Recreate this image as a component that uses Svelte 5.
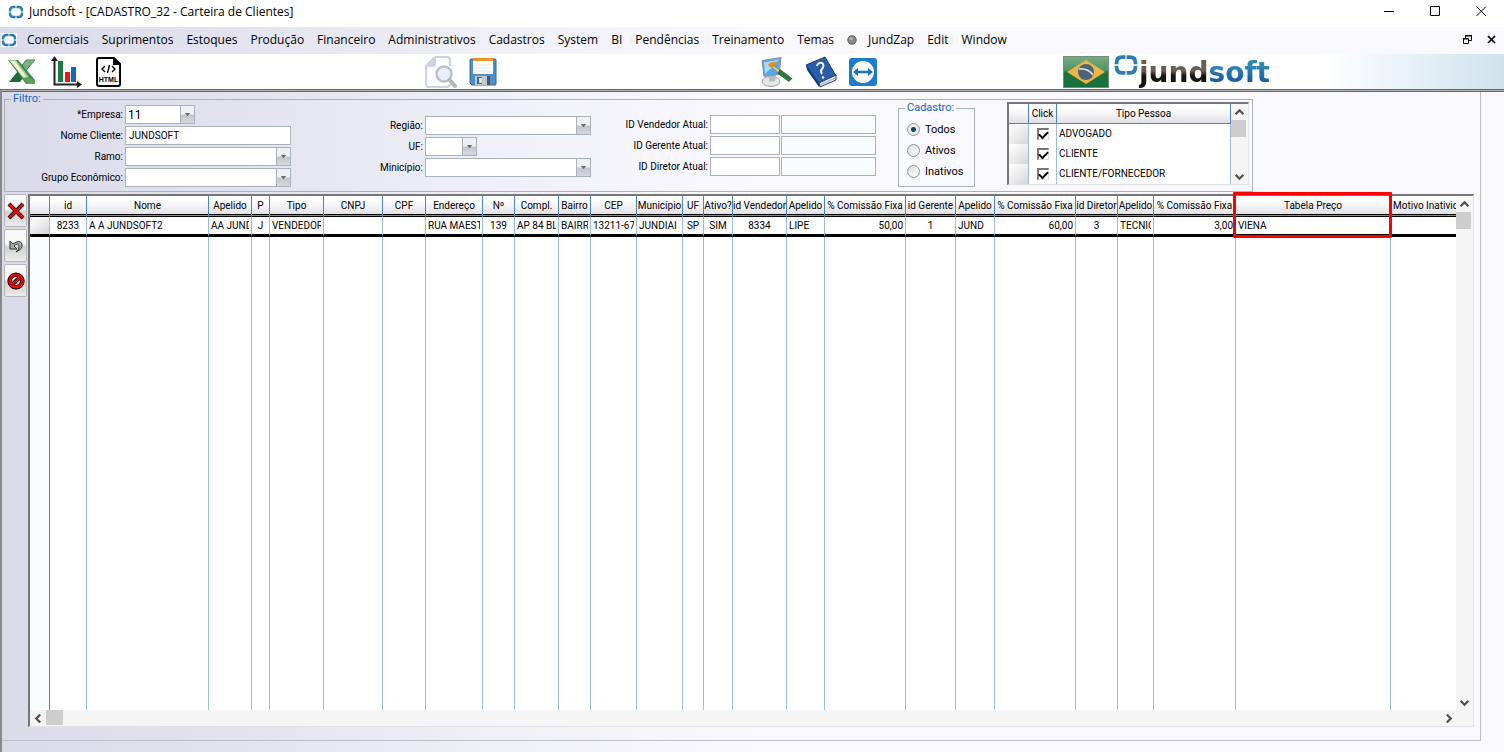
<script>
  const menus = ['Comerciais', 'Suprimentos', 'Estoques', 'Produção', 'Financeiro', 'Administrativos', 'Cadastros', 'System', 'BI', 'Pendências', 'Treinamento', 'Temas'];
  const menusEnd = ['JundZap', 'Edit', 'Window'];

  const tipos = ['ADVOGADO', 'CLIENTE', 'CLIENTE/FORNECEDOR'];
  const status = ['Todos', 'Ativos', 'Inativos'];
  let cadastro = 'Todos';

  const cols = [
    { name: 'id', w: 37, value: '8233', align: 'mid-cell' },
    { name: 'Nome', w: 122, value: 'A A JUNDSOFT2' },
    { name: 'Apelido', w: 43, value: 'AA JUND' },
    { name: 'P', w: 18, value: 'J', align: 'mid-cell' },
    { name: 'Tipo', w: 54, value: 'VENDEDOR' },
    { name: 'CNPJ', w: 59, value: '' },
    { name: 'CPF', w: 43, value: '' },
    { name: 'Endereço', w: 57, value: 'RUA MAEST' },
    { name: 'Nº', w: 32, value: '139', align: 'mid-cell' },
    { name: 'Compl.', w: 44, value: 'AP 84 BL' },
    { name: 'Bairro', w: 32, value: 'BAIRR' },
    { name: 'CEP', w: 46, value: '13211-670' },
    { name: 'Município', w: 46, value: 'JUNDIAI' },
    { name: 'UF', w: 21, value: 'SP', align: 'mid-cell' },
    { name: 'Ativo?', w: 29, value: 'SIM', align: 'mid-cell' },
    { name: 'id Vendedor', w: 54, value: '8334', align: 'mid-cell' },
    { name: 'Apelido', w: 38, value: 'LIPE' },
    { name: '% Comissão Fixa', w: 81, value: '50,00', align: 'num-cell' },
    { name: 'id Gerente', w: 50, value: '1', align: 'mid-cell' },
    { name: 'Apelido', w: 39, value: 'JUND' },
    { name: '% Comissão Fixa', w: 81, value: '60,00', align: 'num-cell' },
    { name: 'id Diretor', w: 42, value: '3', align: 'mid-cell' },
    { name: 'Apelido', w: 36, value: 'TECNIC' },
    { name: '% Comissão Fixa', w: 82, value: '3,00', align: 'num-cell' },
    { name: 'Tabela Preço', w: 155, value: 'VIENA', marked: true },
  ];
</script>

{#snippet mark()}
  <svg class="mark" viewBox="0 0 16 14" aria-hidden="true">
    <g fill="none" stroke="#2a7db5" stroke-width="2.4">
      <path d="M7.6 2H5.5Q2 2 2 5.5V6.6" /><path d="M8.4 2H10.5Q14 2 14 5.5V6.6" />
      <path d="M2 7.4V8.5Q2 12 5.5 12H7.6" /><path d="M14 7.4V8.5Q14 12 10.5 12H8.4" />
    </g>
  </svg>
{/snippet}

{#snippet chevron(dir)}
  <svg class="chevron {dir}" viewBox="0 0 8 8" aria-hidden="true">
    <path d="M0.5 5.5L4 2L7.5 5.5" fill="none" stroke="#505050" stroke-width="2" />
  </svg>
{/snippet}

{#snippet combo(id, value, size)}
  <span class="combo {size}">
    <select {id}><option>{value}</option></select>
    <svg class="drop" viewBox="0 0 14 17" aria-hidden="true"><path d="M4 7H10L7 10.5Z" fill="#6d6d6d" /></svg>
  </span>
{/snippet}

<div class="app">
  <header class="titlebar">
    {@render mark()}
    <h1>Jundsoft - [CADASTRO_32 - Carteira de Clientes]</h1>
    <div class="window-buttons">
      <button aria-label="Minimize"><svg viewBox="0 0 11 11"><path d="M0 5.5H10" stroke="#000" /></svg></button>
      <button aria-label="Maximize"><svg viewBox="0 0 11 11"><path d="M0.5 0.5H9.5V9.5H0.5Z" fill="none" stroke="#000" /></svg></button>
      <button aria-label="Close"><svg viewBox="0 0 11 11"><path d="M0.5 0.5L10 10M10 0.5L0.5 10" stroke="#000" /></svg></button>
    </div>
  </header>

  <nav class="menubar">
    <span class="menu-mark">{@render mark()}</span>
    {#each menus as m}
      <button>{m}</button>
    {/each}
    <svg class="dot" viewBox="0 0 10 10" aria-hidden="true">
      <circle cx="5" cy="5" r="4.2" fill="#8b8e8b" stroke="#555" /><circle cx="4" cy="3.6" r="1.6" fill="#b4b6b4" />
    </svg>
    {#each menusEnd as m}
      <button>{m}</button>
    {/each}
    <div class="child-buttons">
      <button aria-label="Restore window">
        <svg viewBox="0 0 9 9"><path d="M2.5 3V0.5H8.5V5.5H6M2 1H9M0.5 3.5H5.5V8.5H0.5ZM0 4H6" fill="none" stroke="#000" /></svg>
      </button>
      <button aria-label="Close window">
        <svg viewBox="0 0 9 9"><path d="M1 1L8 8M8 1L1 8" stroke="#000" stroke-width="1.7" /></svg>
      </button>
    </div>
  </nav>

  <div class="toolbar">
    <div class="tools first">
      <button aria-label="Excel">
        <svg viewBox="0 0 28 26">
          <path d="M18 1H27L14 16L9 13Z" fill="#7fae80" stroke="#4a8a58" />
          <path d="M1 23L10 12L17 16L12 23Z" fill="#1d6b3a" />
          <path d="M0 1H10L27 21V25H18Z" fill="#3d8a4e" />
          <path d="M1 1H8L21 18L17 21Z" fill="#a9c98f" />
          <path d="M2 2H7L18 17L16 19Z" fill="#eef0cf" />
          <path d="M15 19L21 18L27 22V25H19Z" fill="#5aa15c" />
        </svg>
      </button>
      <button aria-label="Gráfico">
        <svg class="chart" viewBox="0 0 32 32">
          <path d="M4.5 4V28.5H27" fill="none" stroke="#222" stroke-width="2" />
          <path d="M1 5L4.5 0L8 5ZM27 25L32 28.5L27 32Z" fill="#222" />
          <path d="M8 5H13V26H8Z" fill="#1f7a43" /><path d="M15 16H20V26H15Z" fill="#f01414" />
          <path d="M21 11H26V26H21Z" fill="#1668b8" />
        </svg>
      </button>
      <button aria-label="HTML">
        <svg class="html" viewBox="0 0 25 30">
          <path d="M3 1H18L24 7V27Q24 29 22 29H3Q1 29 1 27V3Q1 1 3 1Z" fill="#fff" stroke="#000" stroke-width="2" />
          <path d="M17 0L25 8H17Z" />
          <path d="M9 9L6 12L9 15M16 9L19 12L16 15M13.5 8L11.5 16" fill="none" stroke="#000" stroke-width="1.4" />
          <text x="12.5" y="25" text-anchor="middle">HTML</text>
        </svg>
      </button>
    </div>
    <div class="tools second">
      <button aria-label="Visualizar" disabled>
        <svg viewBox="0 0 32 32">
          <path d="M10 1H22Q25 1 25 4V10M10 1L1 10V28Q1 31 4 31H21Q25 31 25 28M10 1V8Q10 10 8 10H1" fill="none" stroke="#cdd2ea" stroke-width="2.2" />
          <path d="M10 1V10H1Z" fill="#cdd2ea" />
          <circle cx="19" cy="18" r="7.5" fill="#e7f0fb" stroke="#bcc0c6" stroke-width="2.4" />
          <path d="M24.5 24L30 30" stroke="#b3b6ba" stroke-width="4" stroke-linecap="round" />
        </svg>
      </button>
      <button aria-label="Salvar">
        <svg viewBox="0 0 28 28">
          <path d="M1 2Q1 1 2 1H26Q27 1 27 2V26Q27 27 26 27H3L1 25Z" fill="#4d8fca" stroke="#36699b" />
          <path d="M4 1H24V16H4Z" fill="#fff" /><path d="M4 0H24V3H4Z" fill="#f09524" />
          <path d="M6 7H22M6 10H22M6 13H22" stroke="#e3e6ea" />
          <path d="M6 18H21V27H6Z" fill="#c2c8ce" /><path d="M8 19H13V26H8Z" fill="#346896" />
          <path d="M10 20H13V25H10Z" fill="#dde1e5" /><path d="M18 18H21V27H18Z" fill="#4a5866" />
        </svg>
      </button>
    </div>
    <div class="tools third">
      <button aria-label="Temas">
        <svg viewBox="0 0 32 31">
          <ellipse cx="10" cy="25" rx="9" ry="5" fill="#e4e7ea" stroke="#9aa1a8" />
          <path d="M8 18H15L14 25H8Z" fill="#b5bcc4" />
          <path d="M1 4L20 1L18 18L3 20Z" fill="#56a8e8" stroke="#8795a3" />
          <path d="M3 6L18 3L10 12L4 17Z" fill="#aadcfa" />
          <path d="M7 8Q11 4 16 6L14 10Q11 12 8 10Z" fill="#e38b2e" />
          <path d="M12 9L20 14L18 17L11 11Z" fill="#e8c28a" stroke="#8b6a3f" stroke-width="0.6" />
          <path d="M19 13L31 22L28 25L17 17Z" fill="#2e7c3d" stroke="#1d5329" stroke-width="0.7" />
        </svg>
      </button>
      <button aria-label="Ajuda">
        <svg viewBox="0 0 32 32">
          <path d="M1 9L20 1L31 20L14 29Z" fill="#2b5ea9" stroke="#1c3c7d" />
          <path d="M1 9L2 14L14 31V27Z" fill="#173a7c" />
          <path d="M14 27L31 19V24L15 31Z" fill="#e8ebf0" stroke="#1c3c7d" />
          <path d="M15 29L30 22" stroke="#a5adb8" />
          <path d="M12 10Q13 6 17 7Q20 9 17 13Q15 15 17 18" fill="none" stroke="#fff" stroke-width="1.9" />
          <circle cx="18" cy="21.5" r="1.3" fill="#fff" />
        </svg>
      </button>
      <button aria-label="Suporte remoto">
        <svg viewBox="0 0 28 28">
          <rect width="28" height="28" rx="3" fill="#1c7bd0" /><circle cx="14" cy="14" r="11" fill="#fff" />
          <path d="M4 14L9 10V12.7H19V10L24 14L19 18V15.3H9V18Z" fill="#1c6fbe" />
        </svg>
      </button>
    </div>
    <div class="brand">
      <svg class="flag" viewBox="0 0 46 32" aria-label="Brasil">
        <defs>
          <linearGradient id="green" x1="0" y1="0" x2="0" y2="1">
            <stop offset="0" stop-color="#7aac84" /><stop offset="0.45" stop-color="#4c9462" /><stop offset="0.5" stop-color="#1d7640" /><stop offset="1" stop-color="#177038" />
          </linearGradient>
        </defs>
        <rect x="0.5" y="0.5" width="45" height="31" fill="url(#green)" stroke="#6f8f78" />
        <path d="M23 4L42 16L23 28L4 16Z" fill="#f0b445" />
        <circle cx="23" cy="16" r="8" fill="#4b6577" />
        <path d="M16 13Q25 12 30 19" fill="none" stroke="#d5dde3" stroke-width="1.6" />
      </svg>
      <span class="brand-mark">{@render mark()}</span>
      <strong><span>jund</span><span class="soft">soft</span></strong>
    </div>
  </div>

  <main>
    <div class="sheet">
      <fieldset class="filter">
        <legend>Filtro:</legend>
        <div class="fields first-fields">
          <label for="empresa">*Empresa:</label>{@render combo('empresa', '11', 'mid')}
          <label for="nome">Nome Cliente:</label><input id="nome" value="JUNDSOFT" />
          <label for="ramo">Ramo:</label>{@render combo('ramo', '', 'full')}
          <label for="grupo">Grupo Econômico:</label>{@render combo('grupo', '', 'full')}
        </div>
        <div class="fields place">
          <label for="regiao">Região:</label>{@render combo('regiao', '', 'full')}
          <label for="uf">UF:</label>{@render combo('uf', '', 'short')}
          <label for="municipio">Minicípio:</label>{@render combo('municipio', '', 'full')}
        </div>
        <div class="fields ids">
          {#each ['Vendedor', 'Gerente', 'Diretor'] as p}
            <label for="id-{p}">ID {p} Atual:</label>
            <input id="id-{p}" />
            <input class="readonly" aria-label="Nome {p}" readonly />
          {/each}
        </div>
        <fieldset class="status">
          <legend>Cadastro:</legend>
          {#each status as s}
            <label><input type="radio" name="cadastro" value={s} bind:group={cadastro} />{s}</label>
          {/each}
        </fieldset>
        <div class="types">
          <table>
            <thead>
              <tr><th class="sel"></th><th class="click">Click</th><th>Tipo Pessoa</th></tr>
            </thead>
            <tbody>
              {#each tipos as t}
                <tr>
                  <td class="sel"></td>
                  <td class="click"><input type="checkbox" aria-label={t} checked /></td>
                  <td>{t}</td>
                </tr>
              {/each}
            </tbody>
          </table>
          <div class="vscroll">
            <button aria-label="Subir">{@render chevron('up')}</button>
            <span class="thumb"></span>
            <button aria-label="Descer">{@render chevron('down')}</button>
          </div>
        </div>
      </fieldset>

      <div class="work">
        <div class="actions">
          <button aria-label="Excluir">
            <svg viewBox="0 0 18 18"><path d="M2 2L16 16M16 2L2 16" stroke="#000" stroke-width="4" /><path d="M2 2L16 16M16 2L2 16" stroke="#f00" stroke-width="2.4" /></svg>
          </button>
          <button aria-label="Desfazer">
            <svg viewBox="0 0 18 18">
              <path d="M3 4V12H10L7 9Q11 5 12 9Q13 12 9 15Q16 12 15 7Q13 2 6 7Z" fill="#a9b3a9" stroke="#333" />
            </svg>
          </button>
          <button aria-label="Cancelar">
            <svg viewBox="0 0 18 18">
              <g fill="none"><circle cx="9" cy="9" r="6.3" stroke="#000" stroke-width="4.6" /><path d="M5 13L13 5" stroke="#000" stroke-width="4" />
              <circle cx="9" cy="9" r="6.3" stroke="#f00" stroke-width="2.6" /><path d="M4.5 13.5L13.5 4.5" stroke="#f00" stroke-width="2.2" /></g>
            </svg>
          </button>
        </div>

        <div class="grid">
          <div class="grid-body">
            <table>
              <colgroup>
                <col style="width: 20px" />
                {#each cols as c}<col style="width: {c.w}px" />{/each}
                <col />
              </colgroup>
              <thead>
                <tr>
                  <th></th>
                  {#each cols as c}
                    <th class:marked={c.marked}>{c.name}{#if c.marked}<span class="frame"></span>{/if}</th>
                  {/each}
                  <th class="last">Motivo Inatividade</th>
                </tr>
              </thead>
              <tbody>
                <tr class="row">
                  <td class="sel"></td>
                  {#each cols as c}
                    <td class={c.align}><div>{c.value}</div></td>
                  {/each}
                  <td></td>
                </tr>
                <tr class="rest">
                  <td class="gutter"></td>
                  {#each cols as c}<td></td>{/each}
                  <td></td>
                </tr>
              </tbody>
            </table>
            <div class="vscroll">
              <button aria-label="Rolar para cima">{@render chevron('up')}</button>
              <span class="thumb"></span>
              <button aria-label="Rolar para baixo">{@render chevron('down')}</button>
            </div>
          </div>
          <div class="hscroll">
            <button aria-label="Rolar para a esquerda">{@render chevron('left')}</button>
            <span class="thumb"></span>
            <button aria-label="Rolar para a direita">{@render chevron('right')}</button>
          </div>
        </div>
      </div>
    </div>
  </main>
</div>

<style>
:global(body) {
  margin: 0;
}

.app {
  --line: #a9b2ba;
  --blue: #4d84c4;
  --shade: linear-gradient(90deg, #dadae9 0, #e4e4f0 250px, #f0f0f8 500px, #f9f9fd 750px);
  display: flex;
  flex-direction: column;
  height: 100vh;
  font: 12px/16px "Open Sans", "Noto Sans", sans-serif;
  color: #000;
  overflow: hidden;
}

.app *, .app {
  box-sizing: border-box;
}

button {
  padding: 0;
  border: 0;
  background: none;
  font: inherit;
  color: inherit;
}

svg {
  display: block;
}

/* Title bar */
.titlebar {
  display: flex;
  align-items: center;
  height: 27px;
  padding: 0 0 4px 8px;
  gap: 5px;
  background: #fff;
}

.mark {
  width: 16px;
  height: 14px;
}

h1 {
  margin: 0;
  flex: 1;
  font-size: 12px;
  font-weight: normal;
}

.window-buttons {
  display: flex;
}

.window-buttons button {
  display: grid;
  place-items: center;
  width: 46px;
  height: 23px;
}

.window-buttons svg {
  width: 11px;
  height: 11px;
}

/* Menu */
.menubar {
  display: flex;
  align-items: center;
  height: 27px;
  padding: 0 8px 2px 1px;
  gap: 13px;
  background: var(--shade);
}

.menu-mark {
  margin-right: -3px;
  background: #fff;
}

.dot {
  width: 10px;
  height: 10px;
  margin-right: -2px;
}

.child-buttons {
  display: flex;
  gap: 15px;
  margin-left: auto;
}

.child-buttons svg {
  width: 9px;
  height: 9px;
}

/* Toolbar */
.toolbar {
  display: flex;
  align-items: center;
  height: 36px;
  border-bottom: 1px solid #666;
  background: linear-gradient(90deg, transparent 88%, #e6f1f7 94%, #cfe2ec), #fff;
}

.tools {
  display: flex;
  align-items: center;
  gap: 14px;
  padding-left: 8px;
}

.tools svg {
  width: 28px;
  height: 26px;
}

.tools .chart {
  width: 32px;
  height: 32px;
}

.tools .html {
  width: 25px;
  height: 30px;
}

.html text {
  font: bold 7px "Liberation Sans", sans-serif;
}

.first {
  flex: 0 0 424px;
}

.second {
  flex: 0 0 337px;
  padding-left: 1px;
  gap: 12px;
}

.second svg, .third svg {
  width: 32px;
  height: 32px;
}

.second button:last-child svg, .third button:last-child svg {
  width: 28px;
  height: 28px;
}

.third {
  flex: 0 0 302px;
  padding-left: 0;
  gap: 12px;
}

.brand {
  display: flex;
  align-items: center;
  gap: 4px;
  height: 35px;
}

.flag {
  width: 46px;
  height: 32px;
}

.brand-mark {
  align-self: flex-start;
}

.brand-mark .mark {
  width: 26px;
  height: 22px;
}

.brand strong {
  align-self: flex-end;
  margin-left: -4px;
  font: bold 28px/32px "DejaVu Sans", sans-serif;
}

.brand strong span {
  background: linear-gradient(#6b5d54 45%, #171310 60%);
  background-clip: text;
  color: transparent;
}

.brand strong .soft {
  background: linear-gradient(#2f86b5 30%, #1558a5 80%);
  background-clip: text;
}

/* Form area */
main {
  flex: 1;
  display: flex;
  min-height: 0;
  padding: 1px 23px 11px 0;
  border-top: 1px solid #b4b4b4;
  border-left: 2px solid #888;
  background: var(--shade);
  box-shadow: inset 0 1px #666;
  font: 10px/14px Roboto, "Liberation Sans", sans-serif;
}

.sheet {
  flex: 1;
  display: flex;
  flex-direction: column;
  min-width: 0;
  padding: 1px 6px 13px 2px;
  border-right: 1px solid #bfbfc2;
  border-bottom: 1px solid #bfbfc2;
}

fieldset {
  margin: 0;
  padding: 0;
  border: 1px solid var(--line);
  min-width: 0;
}

legend {
  padding: 0 2px;
  font-size: 11px;
  line-height: 12px;
  color: #1464c0;
}

.filter {
  display: flex;
  align-items: flex-start;
  width: 1249px;
  max-width: 100%;
  height: 99px;
}

.filter > legend {
  margin-left: 6px;
}

.fields {
  display: grid;
  grid-template-columns: 1fr 166px;
  align-items: center;
  gap: 2px;
}

.fields label {
  text-align: right;
  white-space: nowrap;
}

.fields input, .combo {
  width: 100%;
  height: 19px;
  border: 1px solid var(--line);
  background: #fff;
}

.fields input {
  padding: 0 3px;
  font: inherit;
}

.fields .readonly {
  background: #fafdfe;
}

.first-fields {
  flex: 0 0 286px;
}

.place {
  flex: 0 0 300px;
  padding-top: 11px;
}

.ids {
  flex: 0 0 286px;
  grid-template-columns: 1fr 70px 95px;
  padding-top: 10px;
}

.ids input + input {
  margin-left: -1px;
}

.combo {
  display: flex;
}

.combo.mid {
  width: 70px;
}

.combo.short {
  width: 52px;
}

.combo select {
  flex: 1;
  min-width: 0;
  padding: 0 2px;
  border: 0;
  appearance: none;
  background: none;
  font: inherit;
}

.mid select {
  font-size: 12px;
}

.drop {
  width: 14px;
  height: 17px;
  border-left: 1px solid var(--line);
  background: linear-gradient(#eef0f4 45%, #c3c7cd 55%, #d5d8de);
}

.status {
  width: 77px;
  height: 85px;
  margin: -3px 0 0 21px;
  padding: 5px 0 0 8px;
  font-size: 11px;
}

.status legend {
  margin-left: -2px;
}

.status label {
  display: flex;
  align-items: center;
  gap: 5px;
  height: 21px;
}

.status input {
  appearance: none;
  width: 13px;
  height: 13px;
  margin: 0;
  border: 1px solid #8e959c;
  border-radius: 50%;
  background: linear-gradient(135deg, #d8dde2, #fff);
}

.status input:checked {
  background: radial-gradient(circle, #1d4056 0 2px, #e9eef2 3px);
}

/* Client types */
.types {
  display: flex;
  width: 242px;
  height: 83px;
  margin: -3px 0 0 32px;
  border: solid #777;
  border-width: 2px 1px 1px 2px;
  border-right-color: #e3e3e3;
  border-bottom-color: #e3e3e3;
  background: #fff;
  overflow: hidden;
}

table {
  flex: 1;
  table-layout: fixed;
  border-collapse: separate;
  border-spacing: 0;
}

th {
  padding: 0;
  font-weight: normal;
  white-space: nowrap;
  border-right: 1px solid var(--blue);
  background: linear-gradient(#fff 20%, #f3f3f6 55%, #dedee4);
}

td {
  padding: 0 2px;
  white-space: nowrap;
  border-right: 1px solid #9dbce2;
}

.types th {
  height: 20px;
  border-bottom: 1px solid var(--blue);
}

.types td {
  height: 20px;
}

.types .sel {
  width: 20px;
}

.types td.sel, .row .sel {
  background: linear-gradient(90deg, #fff8, #ccc4), linear-gradient(#fff, #d6d6dc);
}

.types .click {
  width: 28px;
  text-align: center;
}

.click input {
  appearance: none;
  display: grid;
  justify-items: center;
  width: 12px;
  height: 12px;
  margin: 0 auto;
  border: solid #777;
  border-width: 2px 1px 1px 2px;
  border-right-color: #ddd;
  border-bottom-color: #ddd;
}

.click input:checked::before {
  content: "";
  width: 7px;
  height: 4px;
  margin-top: 1px;
  border: solid #000;
  border-width: 0 0 2px 2px;
  transform: rotate(-45deg);
}

/* Scrollbars */
.vscroll, .hscroll {
  display: flex;
  background: #f5f5f5;
}

.vscroll {
  flex: 0 0 17px;
  flex-direction: column;
}

.vscroll button, .hscroll button {
  display: grid;
  place-items: center;
  width: 16px;
  height: 16px;
}

.vscroll button:last-child {
  margin-top: auto;
}

.hscroll button:last-child {
  margin-left: auto;
}

.thumb {
  width: 15px;
  height: 17px;
  background: #cdcdcd;
}

.hscroll .thumb {
  width: 17px;
  height: 15px;
}

.chevron {
  width: 9px;
  height: 9px;
}

.chevron.down {
  transform: rotate(180deg);
}

.chevron.left {
  transform: rotate(-90deg);
}

.chevron.right {
  transform: rotate(90deg);
}

/* Work area */
.work {
  flex: 1;
  display: flex;
  min-height: 0;
  padding-top: 2px;
}

.actions {
  display: flex;
  flex-direction: column;
  gap: 2px;
  width: 24px;
}

.actions button {
  display: grid;
  place-items: center;
  width: 23px;
  height: 33px;
  border: 1px solid #b4b5bb;
  border-radius: 2px;
  background: linear-gradient(#f8f8f8 45%, #cfcfcf 55%, #ededed);
}

.actions svg {
  width: 18px;
  height: 18px;
}

.grid {
  flex: 1;
  display: flex;
  flex-direction: column;
  min-width: 0;
  border: solid #777;
  border-width: 2px 1px 1px 2px;
  border-right-color: #e3e3e3;
  border-bottom-color: #e3e3e3;
  background: #fff;
}

.grid-body {
  flex: 1;
  display: flex;
  min-height: 0;
}

.grid table {
  width: 100%;
  height: 100%;
}

.grid th {
  height: 20px;
  border-bottom: 1px solid #c87a28;
  box-shadow: inset 0 -1px #000;
}

.grid .marked {
  position: relative;
}

.frame {
  position: absolute;
  top: -4px;
  left: -3px;
  width: 159px;
  height: 46px;
  border: 3px solid #f00;
  border-radius: 1px;
}

.grid .last {
  padding-left: 2px;
  text-align: left;
  overflow: hidden;
}

.grid th:last-child, .grid td:last-child {
  border-right: 0;
}

.row td {
  height: 21px;
  border-top: 1px solid #000;
  border-bottom: 3px solid #000;
}

.rest {
  height: 100%;
}

.row div {
  overflow: hidden;
}

.mid-cell {
  text-align: center;
}

.num-cell {
  text-align: right;
}

.gutter {
  background: #fafdfe;
  border-right-color: var(--blue);
}

.hscroll {
  height: 16px;
  padding-right: 17px;
}
</style>
